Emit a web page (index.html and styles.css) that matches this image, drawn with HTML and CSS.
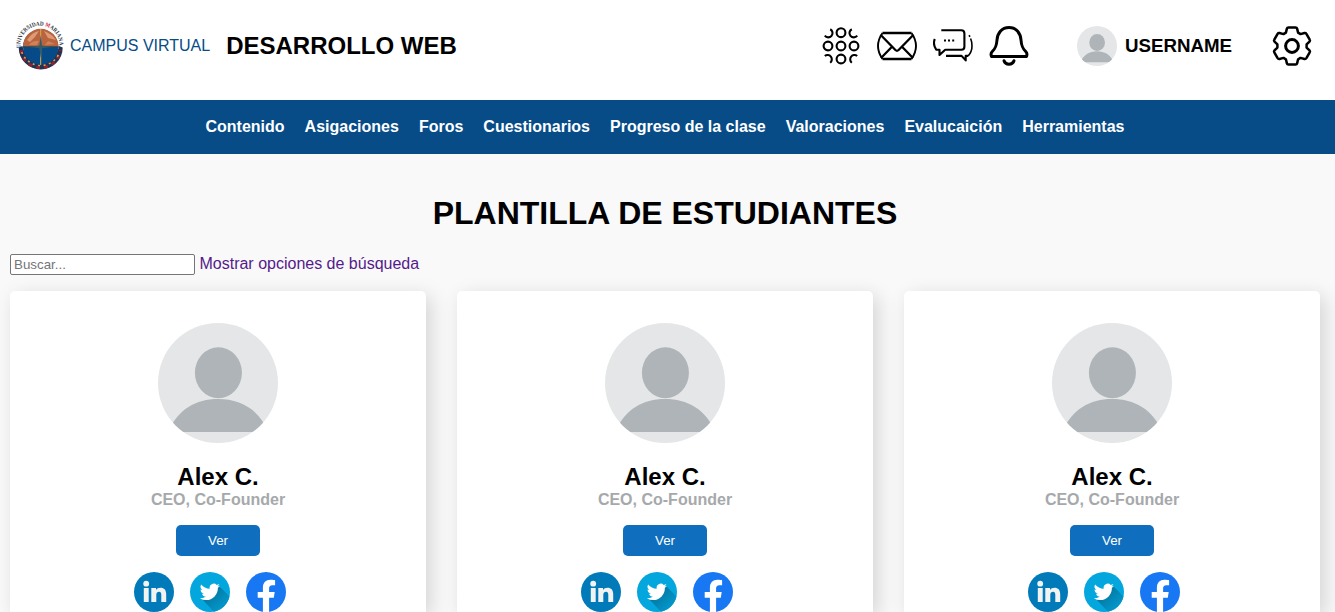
FILE: index.html
```html
<!DOCTYPE html>
<html lang="es">
<head>
<meta charset="utf-8">
<title>Campus Virtual</title>
<link rel="stylesheet" href="styles.css">
</head>
<body>
<svg class="defs" width="0" height="0">
  <symbol id="avatar" viewBox="0 0 120 120">
    <clipPath id="disc"><circle cx="60" cy="60" r="60"/></clipPath>
    <g clip-path="url(#disc)"><path fill="#e4e6e7" d="M0 0h120v120H0z"/><ellipse cx="60.4" cy="49.7" rx="23.5" ry="25.5" fill="#aeb4b7"/><path fill="#aeb4b7" d="M10 109C20 86 38 76 60 76s41 10 50 33z"/></g>
  </symbol>
  <symbol id="linkedin" viewBox="0 0 40 40">
    <circle cx="20" cy="20" r="20" fill="#007ab9"/>
    <g fill="#f1f2f2"><circle cx="12.2" cy="11.7" r="2.9"/><path d="M9.8 16.1h4.9v14H9.8zM17.3 16.1H22v2c1-1.6 2.4-2.4 4.6-2.4 3.5 0 5.6 2.2 5.6 6.4v8h-4.9v-7.4c0-2-.7-3-2.2-3-1.7 0-2.8 1.1-2.8 3.1v7.3h-5z"/></g>
  </symbol>
  <symbol id="twitter" viewBox="0 0 40 40">
    <clipPath id="tdisc"><circle cx="20" cy="20" r="20"/></clipPath>
    <linearGradient id="tshade" x1="0" y1="0" x2="1" y2="1"><stop offset=".3" stop-color="#047ca8"/><stop offset=".8" stop-color="#02a0d5"/></linearGradient>
    <circle cx="20" cy="20" r="20" fill="#03a6dd"/>
    <path clip-path="url(#tdisc)" fill="url(#tshade)" d="M29 14l15 15v15H28L12 27z"/>
    <path fill="#fff" transform="translate(9.8 9.8) scale(.84)" d="M23.95 4.57a10 10 0 0 1-2.83.78 5 5 0 0 0 2.17-2.73 9.7 9.7 0 0 1-3.13 1.2 4.92 4.92 0 0 0-8.38 4.48A14 14 0 0 1 1.64 3.16a4.9 4.9 0 0 0 1.52 6.57 4.9 4.9 0 0 1-2.23-.61v.06a4.92 4.92 0 0 0 3.95 4.83 5 5 0 0 1-2.21.08 4.94 4.94 0 0 0 4.6 3.42A9.9 9.9 0 0 1 0 19.54a14 14 0 0 0 7.55 2.21A13.98 13.98 0 0 0 21.5 7.13a10 10 0 0 0 2.45-2.56z"/>
  </symbol>
  <symbol id="facebook" viewBox="0 0 40 40">
    <circle cx="20" cy="20" r="20" fill="#1877f2"/>
    <path fill="#fff" d="M16.9 40V25.8h-5.2v-5.8h5.2v-4.4c0-5 3-7.8 7.5-7.8 2.2 0 4.7.4 4.7.4v5h-2.7c-2.5 0-3.3 1.5-3.3 3.1V20h5.6l-.9 5.8h-4.7V40z"/>
  </symbol>
</svg>

<header class="header">
  <div class="brand">
    <svg class="logo" viewBox="0 0 50 50">
      <path id="arc" d="M5.6 27A19.6 19.6 0 1 1 44.4 27" fill="none"/>
      <path d="M3.7 26.5A22 22 0 0 0 47.7 26.5L44 25A18.5 18.5 0 0 1 7.5 25z" fill="#213252"/>
      <path d="M6.2 29A19.6 19.6 0 0 0 45.2 29" fill="none" stroke="#8d2233" stroke-width="3" stroke-dasharray="4 4"/>
      <path d="M6.8 31A20 20 0 0 0 44.6 31" fill="none" stroke="#d0a154" stroke-width="1.6" stroke-dasharray="2 3.5"/>
      <circle cx="25.7" cy="26" r="17.7" fill="#064b88"/>
      <path d="M8 25.5a17.7 17.7 0 0 1 35.4 0z" fill="#b9633f"/>
      <path d="M12 19q5-8 12-9-4 7-9 11zM29 10q8 3 12 9l-8-2z" fill="#dc9a75"/>
      <path d="M14 24q4-5 10-4l-2 4zM30 24l3-4 7 3z" fill="#cf8259"/>
      <path d="M8 26h36" stroke="#2b4550" stroke-width="1"/><path d="M25.7 8v36" stroke="#d8b04c" stroke-width="1"/>
      <path d="M25.7 14l1.3 10.5 10 1.5-10 1.2-1.3 10-1.3-10-10-1.2 10-1.5z" fill="#365b65"/>
      <text class="logo-text"><textPath href="#arc" textLength="64" lengthAdjust="spacingAndGlyphs"><tspan fill="#17598f">U</tspan>NIVERSIDAD <tspan fill="#c51f3b">M</tspan>ARIANA</textPath></text>
    </svg>
    <span class="campus">CAMPUS VIRTUAL</span>
    <h2 class="course">DESARROLLO WEB</h2>
  </div>
  <div class="tools">
    <svg viewBox="0 0 40 40" fill="none" stroke="#000" stroke-width="2.1">
      <g><circle cx="20" cy="6.7" r="4.4"/><circle cx="7" cy="20" r="4.4"/><circle cx="20" cy="20" r="4.4"/><circle cx="33" cy="20" r="4.4"/><circle cx="20" cy="33" r="4.4"/></g>
      <path d="M9.2 3.2A4.3 4.3 0 1 1 3.8 9.6M36.2 9.6A4.3 4.3 0 1 1 30.8 3.2M3.8 30A4.3 4.3 0 1 1 9.2 36.7M30.8 36.7A4.3 4.3 0 1 1 36.2 30"/>
    </svg>
    <svg viewBox="0 0 40 40" fill="none" stroke="#000" stroke-width="2.3">
      <path d="M5.5 7h29M5.5 33h29"/><path d="M5.5 7Q-3.5 20 5.5 33M34.5 7q9 13 0 26" stroke-width="1.9"/><path d="M3.5 8.8L18.4 24q1.6 1.5 3.2 0L36.5 8.8M4 32l11-11.3M36 32L25 20.7"/>
    </svg>
    <svg viewBox="0 0 40 40" fill="none" stroke="#000" stroke-width="2.1" stroke-linejoin="round">
      <path d="M8.3 4.2h19.9q3.2 0 3.2 3.2v13.3q0 3-3 3H12.2L6.5 29v-5.3H3.2Q-.4 18.5 1.8 13M13 29.9h15.6l4.1 4.5v-4.5h2.5"/><path d="M35.2 29.9q3.8-4.4 3.8-10 0-4.2-1.4-7.4" stroke-width="1.6"/><path d="M36 9.3l1 1.5" stroke-width="1.6"/>
      <path d="M11 14.4h2M15 14.4h2M19.2 14.4h2" stroke-width="2"/>
    </svg>
    <svg viewBox="0 0 40 40" fill="none" stroke="#000" stroke-width="3" stroke-linejoin="round">
      <path d="M20 1.5C12.5 1.5 8.5 7.3 8 14 7.5 20.5 6.3 22.6 3.3 25.5q-2 2-.8 5h35q1.2-3-.8-5c-3-2.9-4.2-5-4.7-11.5C31.5 7.3 27.5 1.5 20 1.5z"/><path d="M15 34.7c1.5 4.6 8.5 4.6 10 0" stroke-linecap="round"/>
    </svg>
    <div class="user"><svg><use href="#avatar"/></svg><h3>USERNAME</h3></div>
    <svg class="gear" viewBox="0 0 40 40" fill="none" stroke="#000" stroke-width="2.5" stroke-linejoin="round">
      <path d="M16.5 1.4h7q1.3 0 1.6 1.2l1 4q1.2.8 2.4 1.5l4-1.1q1.2-.3 1.9.8l3.3 5.8q.7 1.1-.2 2l-2.9 2.8v3.2l2.9 2.8q.9.9.2 2l-3.3 5.8q-.7 1.1-1.9.8l-4-1.1q-1.2.8-2.4 1.4l-1 4.1q-.3 1.2-1.6 1.2h-7q-1.3 0-1.6-1.2l-1-4.1q-1.2-.6-2.4-1.4l-4 1.1q-1.2.3-1.9-.8l-3.3-5.8q-.7-1.1.2-2l2.9-2.8v-3.2l-2.9-2.8q-.9-.9-.2-2l3.3-5.8q.7-1.1 1.9-.8l4 1.1q1.2-.7 2.4-1.5l1-4q.3-1.2 1.6-1.2z"/><circle cx="20" cy="20" r="6.4" stroke-width="3"/>
    </svg>
  </div>
</header>

<nav class="nav">
  <a>Contenido</a><a>Asigaciones</a><a>Foros</a><a>Cuestionarios</a><a>Progreso de la clase</a><a>Valoraciones</a><a>Evalucaición</a><a>Herramientas</a>
</nav>

<main class="main">
  <h1>PLANTILLA DE ESTUDIANTES</h1>
  <div class="search"><input type="text" placeholder="Buscar..."> <a>Mostrar opciones de búsqueda</a></div>
  <div class="cards">
    <article class="card">
      <svg class="photo"><use href="#avatar"/></svg>
      <h2>Alex C.</h2><p>CEO, Co-Founder</p><button>Ver</button>
      <div class="social"><svg><use href="#linkedin"/></svg><svg><use href="#twitter"/></svg><svg><use href="#facebook"/></svg></div>
    </article>
    <article class="card">
      <svg class="photo"><use href="#avatar"/></svg>
      <h2>Alex C.</h2><p>CEO, Co-Founder</p><button>Ver</button>
      <div class="social"><svg><use href="#linkedin"/></svg><svg><use href="#twitter"/></svg><svg><use href="#facebook"/></svg></div>
    </article>
    <article class="card">
      <svg class="photo"><use href="#avatar"/></svg>
      <h2>Alex C.</h2><p>CEO, Co-Founder</p><button>Ver</button>
      <div class="social"><svg><use href="#linkedin"/></svg><svg><use href="#twitter"/></svg><svg><use href="#facebook"/></svg></div>
    </article>
  </div>
</main>
</body>
</html>
```

FILE: styles.css
```css
* { box-sizing: border-box; margin: 0; }
body {
  height: 612px;
  overflow: hidden;
  background: #f9f9f9;
  color: #000;
  font-family: "Liberation Sans", Arial, sans-serif;
  font-size: 16px;
}
svg { display: block; flex: none; }
.defs { position: absolute; }

.header {
  display: flex;
  justify-content: space-between;
  height: 100px;
  padding: 20px 23px 0 15px;
  background: #fff;
}
.brand, .tools { display: flex; align-items: center; height: 52px; }
.logo { width: 50px; height: 50px; overflow: visible; }
.logo-text { font: bold 6px "Liberation Serif", serif; fill: #303743; }
.campus { margin-left: 5px; color: #074c87; }
.course { margin-left: 16px; font-size: 24px; }
.tools { gap: 16px; }
.tools svg { width: 40px; height: 40px; }
.user { display: flex; align-items: center; gap: 8px; margin: 0 24px 0 32px; }
.user h3 { font-size: 18.72px; }

.nav {
  display: flex;
  justify-content: center;
  align-items: center;
  gap: 20px;
  height: 54px;
  padding-right: 5px;
  background: #074c87;
  color: #fff;
  font-weight: bold;
}

.main { padding: 41px 15px 0 10px; }
.main h1 { text-align: center; font-size: 32px; line-height: 37px; }
.search { height: 59px; padding-top: 22px; line-height: 18px; }
.search input {
  width: 185px;
  height: 21px;
  padding: 1px 3px;
  border: 1px solid #767676;
  border-radius: 2px;
  font: 13.333px "Liberation Sans", Arial, sans-serif;
}
.search a { color: #551a8b; }

.cards { display: grid; grid-template-columns: repeat(3, 416px); justify-content: space-between; }
.card {
  display: flex;
  flex-direction: column;
  align-items: center;
  height: 321px;
  padding-top: 32px;
  border-radius: 5px 5px 0 0;
  background: #fff;
  box-shadow: 5px 5px 20px rgba(0, 0, 0, .15);
}
.photo { width: 120px; height: 120px; }
.card h2 { margin-top: 20px; font-size: 24px; line-height: 27px; }
.card p { margin-top: 1px; color: #a6a9ab; font-weight: bold; line-height: 18px; }
.card button {
  width: 84px;
  height: 31px;
  margin: 16px 0;
  border: 0;
  border-radius: 5px;
  background: #0f6fbe;
  color: #fff;
  font: 13.333px "Liberation Sans", Arial, sans-serif;
}
.social { display: flex; }
.social svg { width: 40px; height: 40px; margin-right: 16px; }
```
